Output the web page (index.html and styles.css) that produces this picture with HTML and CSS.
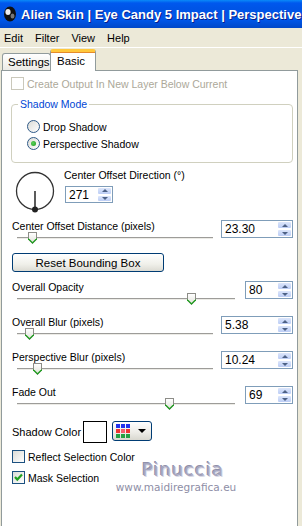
FILE: index.html
```html
<!DOCTYPE html>
<html lang="en">
<head>
    <meta charset="UTF-8">
    <title>Eye Candy 5 Impact - Perspective Shadow</title>
    <link rel="stylesheet" href="styles.css">
</head>
<body>

    <!-- Barra de título -->
    <div class="titlebar">
        <svg class="app-icon" width="14" height="16" viewBox="0 0 14 16">
            <ellipse cx="7" cy="8" rx="6" ry="7.5" fill="#111"/>
            <ellipse cx="5" cy="6" rx="2.6" ry="3" fill="#eee"/>
            <ellipse cx="9.5" cy="10" rx="2" ry="2.5" fill="#777"/>
        </svg>
        <span class="title">Alien Skin | Eye Candy 5 Impact | Perspective</span>
    </div>

    <div class="menubar">
        <span>Edit</span>
        <span>Filter</span>
        <span>View</span>
        <span>Help</span>
    </div>

    <div class="tabs">
        <div class="tab">Settings</div>
        <div class="tab active">Basic</div>
    </div>

    <div class="page">
        <div class="check-row disabled">
            <span class="checkbox"></span>
            <span>Create Output In New Layer Below Current</span>
        </div>

        <fieldset class="group">
            <legend>Shadow Mode</legend>
            <div class="radios">
                <div class="radio-row"><span class="radio"></span>Drop Shadow</div>
                <div class="radio-row"><span class="radio on"></span>Perspective Shadow</div>
            </div>
        </fieldset>

        <div class="direction">
            <svg class="dial" width="42" height="44" viewBox="0 0 42 44">
                <circle cx="20" cy="21" r="18.5" fill="none" stroke="#333" stroke-width="1.3"/>
                <line x1="20" y1="21" x2="20" y2="39" stroke="#333" stroke-width="1.6"/>
                <circle cx="20" cy="39.5" r="3" fill="#222"/>
            </svg>
            <div class="direction-ctl">
                <div class="label">Center Offset Direction (°)</div>
                <div class="spin small">
                    <span class="spin-value">271</span>
                    <span class="spin-btns"><i class="up"></i><i class="down"></i></span>
                </div>
            </div>
        </div>

        <div class="slider-row first">
            <div class="slider-col">
                <div class="label">Center Offset Distance (pixels)</div>
                <div class="track"><span class="thumb" style="left: 11px"></span></div>
            </div>
            <div class="spin">
                <span class="spin-value">23.30</span>
                <span class="spin-btns"><i class="up"></i><i class="down"></i></span>
            </div>
        </div>

        <button class="xp-btn">Reset Bounding Box</button>

        <div class="slider-row">
            <div class="slider-col">
                <div class="label">Overall Opacity</div>
                <div class="track"><span class="thumb" style="left: 170px"></span></div>
            </div>
            <div class="spin small">
                <span class="spin-value">80</span>
                <span class="spin-btns"><i class="up"></i><i class="down"></i></span>
            </div>
        </div>

        <div class="slider-row">
            <div class="slider-col">
                <div class="label">Overall Blur (pixels)</div>
                <div class="track"><span class="thumb" style="left: 8px"></span></div>
            </div>
            <div class="spin">
                <span class="spin-value">5.38</span>
                <span class="spin-btns"><i class="up"></i><i class="down"></i></span>
            </div>
        </div>

        <div class="slider-row">
            <div class="slider-col">
                <div class="label">Perspective Blur (pixels)</div>
                <div class="track"><span class="thumb" style="left: 16px"></span></div>
            </div>
            <div class="spin">
                <span class="spin-value">10.24</span>
                <span class="spin-btns"><i class="up"></i><i class="down"></i></span>
            </div>
        </div>

        <div class="slider-row">
            <div class="slider-col">
                <div class="label">Fade Out</div>
                <div class="track"><span class="thumb" style="left: 148px"></span></div>
            </div>
            <div class="spin small">
                <span class="spin-value">69</span>
                <span class="spin-btns"><i class="up"></i><i class="down"></i></span>
            </div>
        </div>

        <div class="color-row">
            <span class="label">Shadow Color</span>
            <span class="swatch"></span>
            <span class="color-btn">
                <span class="palette">
                    <i class="b"></i><i class="b"></i><i class="b"></i>
                    <i class="r"></i><i class="p"></i><i class="r"></i>
                    <i class="g"></i><i class="g"></i><i class="g"></i>
                </span>
                <span class="caret"></span>
            </span>
        </div>

        <div class="check-row opt reflect">
            <span class="checkbox"></span>
            <span>Reflect Selection Color</span>
        </div>
        <div class="check-row opt">
            <span class="checkbox checked">
                <svg width="11" height="11" viewBox="0 0 11 11"><path d="M2 5 L4.3 7.6 L9 2.6" fill="none" stroke="#21A121" stroke-width="2.2"/></svg>
            </span>
            <span>Mask Selection</span>
        </div>

        <!-- Marca de agua -->
        <div class="watermark">
            <div class="wm-name">Pinuccia</div>
            <div class="wm-url">www.maidiregrafica.eu</div>
        </div>
    </div>

</body>
</html>
```

FILE: styles.css
```css
body {
    margin: 0;
    background-color: #ECE9D8;
    font-family: "Liberation Sans", Arial, sans-serif;
    font-size: 10.5px;
    color: #000;
    height: 526px;
    overflow: hidden;
}

.titlebar {
    height: 28px;
    display: flex;
    align-items: center;
    padding-left: 3px;
    color: #fff;
    white-space: nowrap;
    overflow: hidden;
    background: linear-gradient(#0A8AF8 0, #0058EE 3px, #0054E6 8px, #0056E8 20px, #0047C8 100%);
}

.app-icon {
    flex: none;
}

.title {
    font-weight: bold;
    font-size: 13px;
    margin-left: 4px;
    text-shadow: 1px 1px #0A1E8C;
}

.menubar {
    height: 19px;
    display: flex;
    align-items: center;
    gap: 12px;
    padding-left: 4px;
    font-size: 11px;
}

.tabs {
    height: 23px;
    box-sizing: border-box;
    border-top: 1px solid #fff;
    display: flex;
    align-items: flex-end;
    padding-left: 2px;
}

.tab {
    height: 17px;
    box-sizing: border-box;
    width: 49px;
    padding-left: 5px;
    line-height: 16px;
    border: 1px solid #919B9C;
    border-bottom: none;
    border-radius: 3px 3px 0 0;
    background: linear-gradient(#FFFFFF, #ECEBE6);
    font-size: 11.5px;
}

.tab.active {
    position: relative;
    z-index: 1;
    width: 46px;
    height: 22px;
    margin-bottom: -1px;
    margin-left: -1px;
    padding-left: 6px;
    line-height: 18px;
    background: #fff;
    border-top: 3px solid #FFC83C;
    box-shadow: inset 0 1px #E68B2C;
}

.page {
    position: relative;
    margin-left: 1px;
    width: 297px;
    height: 460px;
    box-sizing: border-box;
    border: 1px solid #919B9C;
    background: #fff;
    padding: 6px 4px 0 9px;
}

.label {
    line-height: 13px;
}

.check-row {
    display: flex;
    align-items: center;
    height: 13px;
    gap: 3px;
}

.check-row.disabled {
    color: #ACA899;
}

.checkbox {
    width: 11px;
    height: 11px;
    border: 1px solid #1C5180;
    background: linear-gradient(135deg, #DCDCD7, #FFFFFF);
    display: flex;
    align-items: center;
    justify-content: center;
}

.check-row.disabled .checkbox {
    border-color: #CAC8BB;
    background: #fff;
}

.check-row.opt {
    margin-top: 8px;
    margin-left: 1px;
}

.check-row.reflect {
    margin-top: 7px;
}

.group {
    margin: 8px 0 0 0;
    padding: 0 0 10px 0;
    width: 282px;
    box-sizing: border-box;
    border: 1px solid #D0D0BF;
    border-radius: 4px;
}

.group legend {
    margin-left: 6px;
    padding: 0 2px;
    color: #0046D5;
    line-height: 13px;
}

.radios {
    padding: 7px 0 0 15px;
}

.radio-row {
    display: flex;
    align-items: center;
    height: 17px;
    gap: 3px;
}

.radio {
    width: 11px;
    height: 11px;
    border: 1px solid #2F5A88;
    border-radius: 50%;
    background: linear-gradient(135deg, #DCDCD7, #FFFFFF);
    display: flex;
    align-items: center;
    justify-content: center;
}

.radio.on::after {
    content: "";
    width: 5px;
    height: 5px;
    border-radius: 50%;
    background: radial-gradient(circle at 40% 40%, #5BD25B, #1E9A1E);
}

.direction {
    display: flex;
    height: 57px;
    padding-top: 6px;
    box-sizing: border-box;
}

.dial {
    margin: 1px 0 0 4px;
}

.direction-ctl {
    margin-left: 7px;
}

.direction-ctl .spin {
    margin-top: 4px;
    height: 17px;
}

.slider-row {
    display: flex;
    height: 35px;
    align-items: flex-start;
}

.slider-row.first {
    height: 33px;
}

.slider-col {
    flex: 1;
}

.slider-col .label {
    margin-left: 1px;
}

.track {
    position: relative;
    margin: 4px 0 0 6px;
    height: 3px;
    border-top: 1px solid #9D9C99;
    border-bottom: 1px solid #fff;
    background: #ECEBE6;
    box-sizing: border-box;
}

.thumb {
    position: absolute;
    top: -6px;
    width: 9px;
    height: 12px;
    background: #8D8D88;
    clip-path: polygon(0 0, 100% 0, 100% 62%, 50% 100%, 0 62%);
}

.thumb::before {
    content: "";
    position: absolute;
    inset: 0;
    background: #1F9E1F;
    clip-path: polygon(0 55%, 100% 55%, 100% 62%, 50% 100%, 0 62%);
}

.thumb::after {
    content: "";
    position: absolute;
    left: 1px;
    top: 1px;
    width: 7px;
    height: 9px;
    background: linear-gradient(#FFFFFF, #E3E3DC);
    clip-path: polygon(0 0, 100% 0, 100% 62%, 50% 100%, 0 62%);
}

.spin {
    display: flex;
    width: 72px;
    height: 18px;
    box-sizing: border-box;
    border: 1px solid #7F9DB9;
    margin-left: 8px;
    background: #fff;
}

.spin.small {
    width: 48px;
    margin-left: 10px;
}

.direction-ctl .spin.small {
    margin-left: 1px;
}

.spin-value {
    flex: 1;
    font-size: 12px;
    line-height: 16px;
    padding-left: 3px;
}

.spin-btns {
    width: 15px;
    display: flex;
    flex-direction: column;
}

.spin-btns i {
    flex: 1;
    background: linear-gradient(#DCE6FB, #BCCDF5);
    border: 1px solid #fff;
    border-radius: 2px;
    display: flex;
    align-items: center;
    justify-content: center;
}

.spin-btns i::after {
    content: "";
    border-left: 3px solid transparent;
    border-right: 3px solid transparent;
}

.spin-btns .up::after {
    border-bottom: 3px solid #4D6185;
}

.spin-btns .down::after {
    border-top: 3px solid #4D6185;
}

.xp-btn {
    display: block;
    width: 152px;
    height: 19px;
    margin: 0 0 9px 1px;
    padding: 0;
    border: 1px solid #003C74;
    border-radius: 3px;
    background: linear-gradient(#FFFFFF, #F0F0EA 60%, #DCDBD3);
    font-family: "Liberation Sans", Arial, sans-serif;
    font-size: 11.5px;
    color: #000;
}

.color-row {
    display: flex;
    align-items: center;
    height: 22px;
}

.color-row .label {
    margin-left: 1px;
    width: 71px;
    font-size: 11px;
}

.swatch {
    width: 24px;
    height: 22px;
    box-sizing: border-box;
    border: 1px solid #000;
    background: #fff;
}

.color-btn {
    margin-left: 5px;
    width: 40px;
    height: 20px;
    box-sizing: border-box;
    border: 1px solid #003C74;
    border-radius: 3px;
    background: linear-gradient(#FFFFFF, #ECEBE6 60%, #D8D7CF);
    display: flex;
    align-items: center;
    padding-left: 3px;
    align-self: flex-start;
}

.palette {
    display: grid;
    grid-template-columns: repeat(3, 4px);
    grid-auto-rows: 4px;
    gap: 1px;
}

.palette i.b { background: #2233EE; }
.palette i.r { background: #EE3333; }
.palette i.p { background: #F06070; }
.palette i.g { background: #22A044; }

.caret {
    margin-left: 8px;
    border-left: 4px solid transparent;
    border-right: 4px solid transparent;
    border-top: 4px solid #000;
}

.watermark {
    position: absolute;
    left: 108px;
    top: 388px;
    width: 132px;
    text-align: center;
    font-family: "DejaVu Sans", sans-serif;
    color: #A6A6BF;
}

.wm-name {
    margin-left: 14px;
    font-size: 18px;
    line-height: 21px;
    letter-spacing: 1px;
    text-shadow: 1px 1px #DADAE6, -1px -1px #9090AA;
}

.wm-url {
    font-size: 10.5px;
    line-height: 14px;
    color: #8E8EA6;
}
```
